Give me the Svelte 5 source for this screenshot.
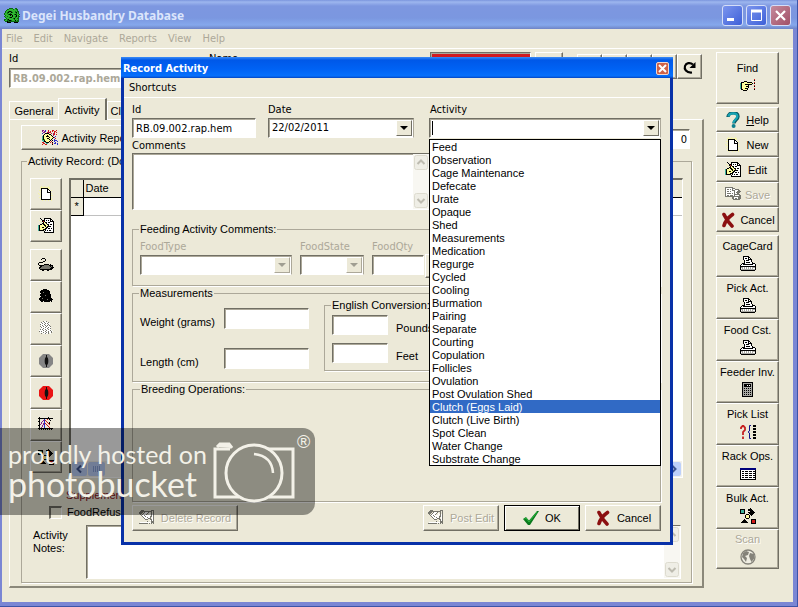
<script>
  const activities = [
    'Feed', 'Observation', 'Cage Maintenance', 'Defecate', 'Urate', 'Opaque', 'Shed',
    'Measurements', 'Medication', 'Regurge', 'Cycled', 'Cooling', 'Burmation', 'Pairing',
    'Separate', 'Courting', 'Copulation', 'Follicles', 'Ovulation', 'Post Ovulation Shed',
    'Clutch (Eggs Laid)', 'Clutch (Live Birth)', 'Spot Clean', 'Water Change', 'Substrate Change'
  ];
  let highlighted = $state('Clutch (Eggs Laid)');

  const menus = ['File', 'Edit', 'Navigate', 'Reports', 'View', 'Help'];
  const tools = ['page', 'edit', 'mouse', 'blob', 'ghost', 'pupil', 'redpupil', 'graph', 'flow'];
  const names = {
    page: 'New activity', edit: 'Edit activity', mouse: 'Feed', blob: 'Defecate', ghost: 'Urate',
    pupil: 'Opaque', redpupil: 'Shed', graph: 'Graph', flow: 'Move'
  };
  const actions = [
    { label: 'Help', icon: 'help' },
    { label: 'New', icon: 'page' },
    { label: 'Edit', icon: 'edit' },
    { label: 'Save', icon: 'save', disabled: true },
    { label: 'Cancel', icon: 'cross' }
  ];
  const reports = [
    { label: 'CageCard', icon: 'printer' },
    { label: 'Pick Act.', icon: 'printer' },
    { label: 'Food Cst.', icon: 'printer' },
    { label: 'Feeder Inv.', icon: 'calc' },
    { label: 'Pick List', icon: 'list' },
    { label: 'Rack Ops.', icon: 'table' },
    { label: 'Bulk Act.', icon: 'flow' },
    { label: 'Scan', icon: 'globe', disabled: true }
  ];

  const ink = {
    K: '#000', W: '#fff', G: '#a9a9a4', D: '#77776f', Y: '#ffff9c', N: '#00007b', R: '#d01818',
    T: '#3fb39b', B: '#2a2ac8', P: '#8a1d8a', g: '#2fb52f', d: '#0a6a12', y: '#f5f3ac'
  };
  const bitmaps = {
    printer: [
      '...KKKKKK.......', '...KWWWWKK......', '...KWKKWKWK.....', '...KWWWWKKKK....',
      '....KWKKKWWK....', '....KWWWWWWK....', '....KWKKKKWWK...', '..KKKWWWWWWWKKK.',
      '.KWKKKKKKKKKKWWK', 'KWWWWWWWWWWWWWWK', 'KKKKKKKKKKKKKKKK', 'KGGWGWGWGWGWGGGK',
      'KWGWGWGWGWGWGWWK', 'KGGGGGGGGGGGGGGK', '.KKKKKKKKKKKKKK.', '................'
    ],
    calc: [
      '..KKKKKKKKKKK...', '..KGGGGGGGGGK...', '..KGKKKKKKKGK...', '..KGKKKWKWKGK...',
      '..KGKKKKKKKGK...', '..KGGGGGGGGGK...', '..KGKGKGKGKGK...', '..KGGGGGGGGGK...',
      '..KGKGKGKGKGK...', '..KGGGGGGGGGK...', '..KGKGKGKGKGK...', '..KGGGGGGGGGK...',
      '..KGKGKGKGKGK...', '..KGGGGGGGGGK...', '..KKKKKKKKKKK...', '................'
    ],
    hand: [
      '..............R.', '..............K.', '....KKK.........', '.KKKYYYKKKKK..R.',
      'TKYYYYYYYYYYK.K.', 'TKYYYKKKKKKK....', 'TKYYYYYYK.....R.', 'TKYYYYKKK.....K.',
      'TKYYYYYYK.......', 'TKYYYKKK......R.', '.KKYYYYK......K.', '...KKKK.........'
    ],
    table: [
      '................', '................',
      'NNNNNNNNNNNNNNNN', 'NNNNNNNNNNNNNNNN', 'KWWWWWWWWWWWWWWK', 'KWKKWKKKWKKKWKKK',
      'KWWWWWWWWWWWWWWK', 'KWKKWKKKWKKKWKKK', 'KWWWWWWWWWWWWWWK', 'KWKKWKKKWKKKWKKK',
      'KWWWWWWWWWWWWWWK', 'KWKKWKKKWKKKWKKK', 'KWWWWWWWWWWWWWWK', 'KKKKKKKKKKKKKKKK'
    ],
    flow: [
      '..........K.....', 'KKKKK...KKKK....', 'KTTTK...KKKKK...', 'KTTTK.....KKKK..',
      'KTTTK...KKKKKKK.', 'KKKKK....KKKKK..', '......KKK.KKK...', '.....KYYYK.K....',
      '.....KYYYK......', '.....KYYYK......', '......KKK.......', '....K......KKKKK',
      '...KKK.....KRRRK', '..KKKKK....KRRRK', '.KKKKKKK...KRRRK', '...........KKKKK'
    ],
    page: [
      '...y..y...y.....', '..yyyyyyyyyy....', '..yKKKKKKKyy....', '...KWWWWWKK.....', '.yyKWWWWWKWK.y..',
      '...KWWWWWKWWK...', '..yKWWWWWKKKK...', 'y..KWWWWWWWWKy..', '.yyKWWWWWWWWK...',
      '...KWWWWWWWWKyy.', '..yKWWWWWWWWK...', '.y.KWWWWWWWWK...', '...KWWWWWWWWKy..',
      '..yKKKKKKKKKKy..', '....y..y..y..y..'
    ],
    edit: [
      '..K...KKKKKKK...', '...K..KWWWWWKK..', '.y..KKKWKWKWKWK.', '..y.KRKWWWWWKKKK',
      '...y.KYKKWKKWWWK', '....KKYYKWWWWWWK', '..KKYKKYYKKWKKWK', 'TKYYYYKKYYKWWWWK',
      'TKYYYYYKYKKKKWWK', 'TKYYKKYYKKWWWWWK', 'TKYYYYYKKWKKWKWK', 'TKYYYKKKWWWWWWWK',
      'TKKKKK.KWKWKKWWK', '......KWWWWWWWWK', '......KKKKKKKKKK'
    ],
    mouse: [
      '................', '....KKK.........', '...K...K........', '.......K........',
      '.....KK.........', '.KKKK...........', 'K...............', 'K.....KKKKK.K...',
      '.KKKKKDDDDDKKKK.', '..KKDDDDDDDDKDK.', '.KKDDDDDDDDDDKKK', '.KDDDDDDDDDDKKK.',
      '..KKKKKKKKKKKK..', '....KK...KK.....'
    ],
    blob: [
      '.....KKKK.......', '...KKKKKKKK.....', '..KKKKKKKKKK....', '..KKKDKKKKKK....',
      '...KKKKKKKKK....', '..KKKKKKKKKKK...', '..KKKKKDKKKKK...', '...KKKKKKKKKK...',
      '..KKKKKKKKKKK...', '.KKKDKKKKKKKKK..', '.KKKKKKKKDKKKKK.', '..KKKKKKKKKKKK..', '...KK.KKKKKK.K..'
    ],
    ghost: [
      '.....DWWD.......', '...DWWDWWWD.....', '..WWDWWDWDWW....', '..DWWWDWWWDW....',
      '...WDWWDWDWD....', '..DWWDWWDWWWD...', '..WDWWWDWWDWW...', '...WWDWWWDWWD...',
      '..DWDWWDWWDWW...', '.WWWWDWWDWWWDW..', '.DWDWWWDWWDWWDW.', '..WWWDWWDWDWWD..', '...D.WWDWWD.W...'
    ],
    graph: [
      '.K........K.....', 'KKKKKKKKKKKKKKK.', '.K....B..R.K....', '.K...PBR....K...',
      'KK..P.B.R.......', '.K.P..B..R.K....', '.K.P.PBR..RK....', '.KP..PB.R..R....',
      'KK..P.B..R......', '.K..P.B...R.....', '.K.P..B....R....', 'KKKKKKKKKKKKKKK.',
      '.K.K.K.K.K.K.K..'
    ],
    save: [
      'DDDDDDDD........', 'DWWWWWWDDD......', 'DWDDWDWDWWDDDD..', 'DWWWWWWDDDWWWDD.',
      'DWDDWDWWWDWWDDDD', 'DWWWWWWWWDWDDDD.', 'DWDDDDWDWDWWDD..', 'DWWWWWWWWDDDDDD.',
      'DWDDWDDDWDWWWWDD', 'DDDDDDDDDDDDDDDD', '.......DDWWWWDDD', '.......DDWDDWDDD',
      '........DDDDDDD.'
    ],
    faded: [
      '..DDD.......DDD.', '.DDDDDDDDDDDD.D.', 'DDDD.DWWWD..D.D.', 'DDD.DWWWD.W.D.D.',
      '.D.DWWWD..WWDWD.', '..DWWDWWWWW.DWD.', '...DWWDWWWWDDWD.', '....DWWWDWWD.WD.',
      '.....DWWWDDD.WD.', '......DDD..DDWD.', '...........WDWD.', '........D...DDD.',
      '.WWWWWWWWWWWDDD.', 'DDDDDDDDD.D.D.D.'
    ],
    spark: [
      'PP.B..R...RR..R.', 'P.PB..R.R.R.RR..', '.PP..RPRR...R.R.', 'B..KKKK..R.PR...',
      '..KYYYYKK..RR.R.', '.KYYYKYYYK.P....', 'TKYYKKKYYYK..B..', 'TKYYYYYKYYYKP...',
      'TKYYYKKYYYK..R..', 'gKgYYYYKYK..B...', 'TTKYYYYYK.K.BBB.', '.TKKYYYK.R..B..B',
      'RR.TKKK.R.K..B..', '.RR.TT....R.BB.B', 'R..RR.....K....B'
    ],
    gecko: [
      '.....dddd..dd...', '...ddggggdggdd..', '..dggggggggggd..', '.dggdKKdgggdgdd.',
      '.dgdKggKdggdKgd.', 'dggdggdgggggdgd.', 'dgggdKKKggdKdggd', '.dggggKgKgggKgd.',
      'dggdggggKggdKgdd', '.dgggdKKgggdggd.', '..dggggggdKggdd.', 'ddgdKgggggdgggd.',
      'dggddKKdgggKgdd.', '.ddKddddddddddd.', '...KKKK...KKKK..'
    ]
  };

  // joins neighbouring pixels of one colour into a single strip
  function runs(rows) {
    const out = [];
    rows.forEach((row, y) => {
      let x = 0;
      while (x < row.length) {
        let end = x + 1;
        while (end < row.length && row[end] === row[x]) end++;
        if (row[x] !== '.') out.push({ x, y, w: end - x, fill: ink[row[x]] });
        x = end;
      }
    });
    return out;
  }
</script>

{#snippet icon(name)}
  <svg class="ico" width="16" height="16" viewBox="0 0 16 16" aria-hidden="true">
    {#if bitmaps[name]}
      <g shape-rendering="crispEdges">
        {#each runs(bitmaps[name]) as r}<rect x={r.x} y={r.y} width={r.w} height="1" fill={r.fill} />{/each}
      </g>
    {:else if name === 'pupil' || name === 'redpupil'}
      <path d="M5 1h6l4 4v6l-4 4H5l-4-4V5z" fill={name === 'pupil' ? '#858585' : '#ea1414'} />
      <path d="M8.500 2v12" stroke="#111" /><ellipse cx="8.500" cy="8" rx="1.800" ry="4" fill="#111" />
    {:else if name === 'help'}
      <path d="M3 5c0-5 10-6 10-.5 0 3-4 3.500-4 7" fill="none" stroke="#0a5a66" stroke-width="3.400" />
      <path d="M3.400 4.500c.6-4 9-4.500 9 0 0 2.600-4 3.400-4 6.500" fill="none" stroke="#17a5b5" stroke-width="2.200" />
      <circle cx="8.600" cy="14" r="2" fill="#0e7f8e" />
    {:else if name === 'cross'}
      <path d="M4 2.500Q7 9 12 14M12.500 2.500Q6 7 4 13.500" fill="none" stroke="#8b0f10" stroke-width="3.600" stroke-linecap="round" />
    {:else if name === 'check'}
      <path d="M0 9l3-2 3 3.500L14 1h2L7 15H5z" fill="#0b7a1e" /><path d="M1.500 9l1.500-1 3 4L14 2" fill="none" stroke="#28b83c" />
    {:else if name === 'list'}
      <path d="M1 5V3.500L2.500 2h1L5 3.500V6L3 8v3M3 12.500V15" fill="none" stroke="#c52020" stroke-width="1.800" />
      <path d="M11 1.500H9.500V7L8 8l1.500 1v5.500H11" fill="none" stroke="#14148c" />
      <path d="M14.500 1v14" stroke="#000" stroke-width="3" stroke-dasharray="2 1" />
    {:else if name === 'globe'}
      <circle cx="8" cy="8" r="7" fill="#efede2" stroke="#85837a" stroke-width="1.300" />
      <path d="M3 4l3-2 3 1-1 3-3 1 2 2-1 4-2-3-2-2zM10 4l4 1 .5 4-3 4-1.500-3-1-3z" fill="#85837a" />
    {:else if name === 'reload'}
      <path d="M10 13.500C4 14 2 10 3 7s5-4 8-1.500" fill="none" stroke="#000" stroke-width="2.200" /><path d="M13.500 3v6h-6z" />
    {/if}
  </svg>
{/snippet}

{#snippet arrow(off)}
  <span class="drop" class:off>
    <svg width="8" height="4" viewBox="0 0 8 4" aria-hidden="true"><path d="M0 0h8L4 4z" fill={off ? '#a09e92' : '#000'} /></svg>
  </span>
{/snippet}

{#snippet scroll()}
  <span class="vscroll" aria-hidden="true">
    <svg width="14" height="15" viewBox="0 0 14 15"><rect x=".5" y=".5" width="13" height="14" rx="2" fill="#efeee6" stroke="#dddbcf" /><path d="M3.500 9L7 5.500 10.500 9" /></svg>
    <svg width="14" height="15" viewBox="0 0 14 15"><rect x=".5" y=".5" width="13" height="14" rx="2" fill="#efeee6" stroke="#dddbcf" /><path d="M3.500 6L7 9.500 10.500 6" /></svg>
  </span>
{/snippet}

<div class="desktop">
  <main class="window">
    <header class="title">
      {@render icon('gecko')}
      <h1>Degei Husbandry Database</h1>
      <div class="caps">
        <button aria-label="Minimize"><svg width="19" height="19" viewBox="0 0 19 19"><path d="M4 13.500h7" stroke="#fff" stroke-width="3" /></svg></button>
        <button aria-label="Maximize"><svg width="19" height="19" viewBox="0 0 19 19"><path d="M4.500 5v9.500h10V5" fill="none" stroke="#fff" /><path d="M4 5h11" stroke="#fff" stroke-width="3" /></svg></button>
        <button class="close" aria-label="Close"><svg width="19" height="19" viewBox="0 0 19 19"><path d="M5 5l9 9M14 5l-9 9" stroke="#fff" stroke-width="2.200" /></svg></button>
      </div>
    </header>
    <nav class="menu">
      {#each menus as m}<button>{m}</button>{/each}
    </nav>

    <div class="body">
      <div class="left">
        <div class="record">
          <label class="field rid"><span>Id</span><input value="RB.09.002.rap.hem" disabled /></label>
          <label class="field rname"><span>Name</span><input disabled /></label>
          <input class="alert" aria-label="Status" readonly />
          <button class="bevel peek tall" aria-label="Photo"></button>
          <button class="bevel peek first" aria-label="First record"></button>
          <button class="bevel peek" aria-label="Previous record"></button>
          <button class="bevel peek" aria-label="Next record"></button>
          <button class="bevel peek" aria-label="Last record"></button>
          <button class="bevel peek" aria-label="Refresh">{@render icon('reload')}</button>
        </div>

        <div class="tabs" role="tablist">
          <button role="tab" aria-selected="false">General</button>
          <button role="tab" aria-selected="true" class="on">Activity</button>
          <button role="tab" aria-selected="false">Clutches</button>
        </div>

        <section class="page">
          <div class="reportrow">
            <button class="bevel report">{@render icon('spark')}Activity Report</button>
            <input class="count" aria-label="Count" value="0" readonly />
          </div>
          <fieldset class="log">
            <legend>Activity Record: (Double click to edit)</legend>
            <div class="logrow">
              <div class="tools">
                {#each tools as t}<button class="bevel" aria-label={names[t]}>{@render icon(t)}</button>{/each}
              </div>
              <div class="gridside">
                <div class="grid">
                  <table>
                    <thead><tr><th class="sel"></th><th>Date</th></tr></thead>
                    <tbody><tr><td class="sel">*</td><td></td></tr></tbody>
                  </table>
                  <div class="hscroll" aria-hidden="true">
                    <svg width="15" height="14" viewBox="0 0 15 14"><rect width="15" height="14" rx="2" /><path d="M9 3.500L5.500 7 9 10.500" /></svg>
                    <svg width="17" height="14" viewBox="0 0 17 14"><rect width="17" height="14" rx="2" /><path class="grip" d="M5.500 4v6M7.500 4v6M9.500 4v6M11.500 4v6" /></svg>
                    <svg class="end" width="15" height="14" viewBox="0 0 15 14"><rect width="15" height="14" rx="2" /><path d="M6 3.500L9.500 7 6 10.500" /></svg>
                  </div>
                </div>
              </div>
            </div>
            <div class="supp">Supplements:</div>
            <label class="refused"><input type="checkbox" />FoodRefused</label>
            <div class="notes">
              <label for="notes">Activity<br />Notes:</label>
              <div class="memo"><textarea id="notes"></textarea>{@render scroll()}</div>
            </div>
          </fieldset>
        </section>
      </div>

      <aside class="side">
        <button class="bevel find">Find{@render icon('hand')}</button>
        <div class="stack">
          {#each actions as a}
            <button class="bevel act" disabled={a.disabled}>{@render icon(a.icon)}<span>{#if a.label === 'Help'}<u>H</u>elp{:else}{a.label}{/if}</span></button>
          {/each}
        </div>
        <div class="stack">
          {#each reports as r}
            <button class="bevel rep" disabled={r.disabled}>{r.label}{@render icon(r.icon)}</button>
          {/each}
        </div>
      </aside>
    </div>
  </main>

  <div class="dialog" role="dialog" aria-label="Record Activity">
    <header class="dtitle">
      <h2>Record Activity</h2>
      <button aria-label="Close dialog"><svg width="11" height="11" viewBox="0 0 11 11"><path d="M2 2l7 7M9 2L2 9" stroke="#fff" stroke-width="2" /></svg></button>
    </header>
    <nav class="dmenu"><button>Shortcuts</button></nav>
    <div class="dbody">
      <div class="heads">
        <label class="field id"><span>Id</span><input value="RB.09.002.rap.hem" /></label>
        <label class="field date"><span>Date</span>
          <span class="combo"><select><option>22/02/2011</option></select>{@render arrow(false)}</span>
        </label>
        <div class="field activity"><label for="activity">Activity</label>
          <div class="combo"><span class="caret"></span><input id="activity" role="combobox" aria-expanded="true" aria-controls="choices" />{@render arrow(false)}</div>
          <ul id="choices" role="listbox" aria-label="Activity">
            {#each activities as a}
              <li role="option" aria-selected={a === highlighted} class:hit={a === highlighted} onmouseenter={() => (highlighted = a)}>{a}</li>
            {/each}
          </ul>
        </div>
      </div>
      <label class="clabel" for="comments">Comments</label>
      <div class="memo comments"><textarea id="comments"></textarea>{@render scroll()}</div>

      <fieldset class="feeding">
        <legend>Feeding Activity Comments:</legend>
        <label class="field ftype"><span>FoodType</span><span class="combo"><select disabled><option></option></select>{@render arrow(true)}</span></label>
        <label class="field fstate"><span>FoodState</span><span class="combo"><select disabled><option></option></select>{@render arrow(true)}</span></label>
        <label class="field fqty"><span>FoodQty</span><input disabled /></label>
        <span class="bevel spin"></span>
      </fieldset>

      <fieldset class="measure">
        <legend>Measurements</legend>
        <div class="metric">
          <label><span>Weight (grams)</span><input /></label>
          <label><span>Length (cm)</span><input /></label>
        </div>
        <fieldset class="english">
          <legend>English Conversion:</legend>
          <label><input /><span>Pounds</span></label>
          <label><input /><span>Feet</span></label>
        </fieldset>
      </fieldset>

      <fieldset class="breeding"><legend>Breeding Operations:</legend></fieldset>

      <div class="buttons">
        <button class="bevel del" disabled>{@render icon('faded')}Delete Record</button>
        <button class="bevel post" disabled>{@render icon('faded')}Post Edit</button>
        <button class="bevel ok">{@render icon('check')}OK</button>
        <button class="bevel">{@render icon('cross')}Cancel</button>
      </div>
    </div>
  </div>

  <div class="mark">
    <div class="words"><p>proudly hosted on</p><p class="big">photobucket</p></div>
    <svg width="82" height="62" viewBox="0 0 82 62" fill="none" stroke="#f3f1e8" stroke-width="3" aria-hidden="true">
      <path d="M17 7H2v48h24M55 7h25v48H56" /><path d="M4 5l3-3h9l3 4" fill="#f3f1e8" />
      <circle cx="41" cy="31" r="28" /><path d="M41 12q18 2 19 19" stroke-width="2.500" />
    </svg>
    <span class="reg">®</span>
  </div>
</div>

<style>
  :global(body) { margin: 0; }
  .desktop, .desktop * { box-sizing: border-box; }
  .desktop {
    position: relative; display: flex; min-height: 100vh; padding: 0 1px 1px 0; background: #3c54a8;
    font: 11px/14px "Liberation Sans", Arial, sans-serif; color: #000; overflow: hidden;
  }
  button, input, select, textarea { font: inherit; color: inherit; margin: 0; padding: 0; border: 0; border-radius: 0; outline: 0; background: none; min-width: 0; }
  h1, h2, p, ul { margin: 0; padding: 0; list-style: none; }
  .ico { display: block; flex: none; }

  .window { flex: 1; display: flex; flex-direction: column; min-width: 0; background: #ece9d8; border: solid #7a86d4; border-width: 0 4px 4px 2px; }
  .title { display: flex; align-items: center; height: 29px; margin: 0 -4px 0 -2px; padding: 2px 6px 0 4px; background: linear-gradient(#7b95dd 0, #9db6ee 2px, #7d97e0 6px, #7b97e0 18px, #85a8ec 25px, #6f84c6 29px); }
  h1 { flex: 1; margin-left: 2px; font: bold 12px/16px "Noto Sans", "DejaVu Sans", sans-serif; color: #dbe5fb; }
  .caps { display: flex; gap: 3px; }
  .caps button { width: 21px; height: 21px; border: 1px solid #d5def8; border-radius: 3px; background: linear-gradient(135deg, #7b95ee, #3e60d8); }
  .caps svg { display: block; }
  .caps .close { background: linear-gradient(135deg, #c58a9c, #a25067); }
  .menu, .dmenu { display: flex; font-family: "DejaVu Sans Condensed", "DejaVu Sans", sans-serif; border-bottom: 1px solid #fff; }
  .menu { gap: 11px; height: 20px; padding: 0 4px; color: #aca899; }

  .body { flex: 1; display: flex; gap: 12px; padding: 0 14px 14px 7px; }
  .left { flex: 1; min-width: 0; display: flex; flex-direction: column; }
  .bevel { display: flex; align-items: center; justify-content: center; background: #ece9d8; border: 1px solid #fff; border-right-color: #716f64; border-bottom-color: #716f64; box-shadow: inset -1px -1px #aca899; }
  .bevel:disabled, .rid input { color: #aca899; }
  .bevel:disabled { text-shadow: 1px 1px #fff; }
  .field { display: flex; flex-direction: column; gap: 2px; }
  .field, .reportrow input { font-family: "DejaVu Sans Condensed", "DejaVu Sans", sans-serif; }
  .field input, .combo, .metric input, .english input, .memo, .count, .alert {
    height: 20px; background: #fff; border: 1px solid #fff; border-top-color: #716f64; border-left-color: #716f64; box-shadow: inset 1px 1px #aca899;
  }
  .field input { padding: 0 3px; width: 100%; }

  .record { display: flex; align-items: flex-start; height: 49px; padding-top: 3px; }
  .rid { width: 190px; }
  .rid input { font-weight: bold; }
  .rname { width: 206px; margin: 0 15px 0 10px; }
  .alert { width: 101px; background: #d01a20; margin-right: 4px; }
  .peek { width: 25px; height: 25px; margin-top: 2px; }
  .tall { width: 28px; margin-top: 0; }
  .first { margin-left: auto; }
  .record .peek:last-child { margin-right: 2px; }

  .tabs { display: flex; align-items: flex-end; height: 21px; }
  .tabs button { height: 18px; width: 49px; border: 1px solid #fff; border-right: 0; border-bottom: 0; }
  .tabs .on { height: 22px; width: 49px; margin-bottom: -1px; background: #ece9d8; border-right: 2px solid #716f64; position: relative; }
  .page { flex: 1; display: flex; flex-direction: column; padding: 5px 10px 3px 11px; border: 1px solid #fff; border-right: 2px solid #8b887a; border-bottom: 2px solid #8b887a; }
  .reportrow { display: flex; justify-content: space-between; }
  .report { width: 132px; height: 25px; gap: 4px; }
  .count { width: 60px; margin: 4px 2px 0 0; padding-right: 2px; text-align: right; }
  fieldset { min-width: 0; margin: 0; padding: 0; border: 1px solid #aca899; box-shadow: 1px 1px #fff; }
  legend { margin-left: -1px; padding: 0 1px; }
  .log { flex: 1; margin-top: 4px; padding: 10px 8px 3px 8px; }
  .log legend { margin-left: -3px; }
  .logrow { display: flex; gap: 7px; height: 300px; }
  .tools { width: 32px; }
  .tools .bevel { width: 32px; height: 32px; }
  .tools .bevel:nth-child(3) { margin-top: 7px; }
  .gridside { flex: 1; min-width: 0; }
  .grid { display: flex; flex-direction: column; height: 300px; background: #fff; border: 2px solid #716f64; border-right: 1px solid #fff; border-bottom: 1px solid #fff; }
  table { width: 100%; border-collapse: collapse; table-layout: fixed; }
  th { height: 17px; padding: 0 2px; background: #ece9d8; font-weight: normal; text-align: left; border-bottom: 1px solid #000; }
  td { height: 18px; padding: 0; border-bottom: 1px solid #c0c0c0; }
  .sel { width: 12px; padding: 0; background: #ece9d8; text-align: center; border-right: 1px solid #000; border-bottom: 1px solid #000; }
  .hscroll { display: flex; gap: 1px; margin-top: auto; height: 16px; padding: 1px; background: #f3f2ec; }
  .hscroll rect { fill: #bdd0fa; }
  .hscroll path { fill: none; stroke: #3f5590; stroke-width: 2; }
  .hscroll .grip { stroke: #8ba3dd; stroke-width: 1; }
  .hscroll .end { margin-left: auto; }
  .supp { margin: 10px 0 0 36px; color: #8c1420; }
  .refused { display: flex; align-items: center; gap: 5px; margin: 3px 0 6px 19px; }
  .refused input { appearance: none; width: 13px; height: 13px; border: 2px solid #716f64; border-right: 1px solid #fff; border-bottom: 1px solid #fff; background: #ece9d8; }
  .notes { display: flex; }
  .notes > label { width: 56px; padding: 4px 0 0 3px; line-height: 13px; }
  .notes .memo { flex: 1; height: 54px; margin-right: 2px; }
  .memo { display: flex; }
  .memo textarea { flex: 1; resize: none; padding: 2px; }
  .vscroll { display: flex; flex-direction: column; justify-content: space-between; width: 16px; padding: 1px; background: #f8f7f2; }
  .vscroll path { fill: none; stroke: #bdbbb0; stroke-width: 2; }

  .side { width: 63px; display: flex; flex-direction: column; gap: 3px; padding-top: 3px; }
  .find { flex-direction: column; width: 100%; height: 52px; gap: 4px; }
  .act { width: 100%; height: 25px; gap: 4px; white-space: nowrap; }
  .act span { min-width: 26px; }
  .rep { flex-direction: column; width: 100%; height: 42px; gap: 3px; padding-bottom: 1px; white-space: nowrap; }
  .rep:last-child { height: 40px; }

  .dialog { position: absolute; left: 121px; top: 57px; width: 552px; background: #ece9d8; border: solid #0831a8; border-width: 0 3px 3px; }
  .dtitle { display: flex; align-items: center; justify-content: space-between; height: 21px; margin: 0 -3px; padding: 2px 4px 0 2px; background: linear-gradient(#3c8cf5, #0058e8 3px, #0062f4 12px, #0670fc 19px, #0444c0 21px); }
  h2 { font: bold 11px/16px "DejaVu Sans Condensed", "DejaVu Sans", sans-serif; color: #fff; }
  .dtitle button { width: 13px; height: 13px; border: 1px solid #f3d7cc; border-radius: 2px; background: #cf6248; }
  .dtitle svg { display: block; }
  .dmenu { height: 20px; padding: 0 5px; }
  .dbody { padding: 5px 9px 11px 8px; }
  .heads { display: flex; }
  .heads .field { gap: 1px; }
  .id { width: 124px; margin-right: 12px; }
  .date { width: 146px; margin-right: 15px; }
  .activity { flex: 1; position: relative; }
  .combo { display: flex; padding: 1px; border-right-color: #aca899; }
  .combo select, .combo input { flex: 1; height: 16px; appearance: none; padding: 0 2px; border: 0; box-shadow: none; background: none; opacity: 1; }
  .drop { flex: none; display: flex; align-items: center; justify-content: center; width: 16px; height: 16px; background: #ece9d8; border: 1px solid #fff; border-right-color: #716f64; border-bottom-color: #716f64; }
  .off { border-right-color: #aca899; border-bottom-color: #aca899; }
  .caret { width: 1px; height: 14px; margin: 1px 0 0 1px; background: #000; }
  .activity label { padding-left: 1px; }
  .activity ul { position: absolute; z-index: 2; left: 0; right: 0; top: 36px; background: #fff; border: 1px solid #000; font-family: "Liberation Sans", Arial, sans-serif; }
  .activity li { height: 13px; line-height: 15px; padding-left: 2px; white-space: nowrap; }
  .activity .hit { background: #316ac5; color: #fff; }
  .clabel { display: block; margin-top: 1px; font-family: "DejaVu Sans Condensed", "DejaVu Sans", sans-serif; }
  .comments { width: 298px; height: 57px; }
  .feeding { display: flex; margin-top: 11px; padding: 5px 7px 10px; color: #aca899; }
  .feeding .field { gap: 1px; }
  .feeding legend { color: #000; line-height: 16px; margin-bottom: -2px; }
  .ftype { width: 152px; margin-right: 8px; }
  .fstate { width: 64px; margin-right: 8px; }
  .fqty { width: 52px; }
  .spin { width: 16px; height: 24px; margin: 14px 0 -4px 1px; }
  .measure { display: flex; height: 96px; padding: 0 8px 0 7px; }
  .metric { display: flex; flex-direction: column; gap: 19px; padding: 8px 15px 0 0; }
  .metric label, .english label { display: flex; align-items: center; }
  .metric span { width: 84px; padding-top: 6px; }
  .metric input { width: 85px; height: 21px; }
  .english { flex: 1; height: 73px; margin-top: -2px; padding: 3px 7px 0; }
  .english label { margin-bottom: 8px; }
  .english input { width: 56px; }
  .english span { margin: 6px 0 0 8px; line-height: 14px; }
  .english label { height: 20px; }
  .breeding { height: 120px; }
  .breeding legend { margin-left: 7px; }
  .buttons { display: flex; gap: 5px; margin-top: 3px; }
  .buttons .bevel { width: 76px; height: 26px; gap: 6px; white-space: nowrap; }
  .buttons .del { width: 106px; margin-right: auto; }
  .buttons .ok { border: 1px solid #000; box-shadow: inset 1px 1px #fff, inset -1px -1px #716f64; }

  .mark { position: absolute; left: 0; top: 428px; display: flex; width: 315px; height: 87px; padding: 14px 0 0 8px; border-radius: 0 12px 12px 0; background: rgba(0, 0, 0, .4); color: #f3f1e8; }
  .words { width: 205px; font-family: Lato, sans-serif; white-space: nowrap; }
  .mark p { font-size: 25px; line-height: 24px; }
  .mark .big { font-size: 34px; line-height: 36px; }
  .reg { font-size: 18px; line-height: 18px; margin: -9px 0 0 2px; }
</style>
